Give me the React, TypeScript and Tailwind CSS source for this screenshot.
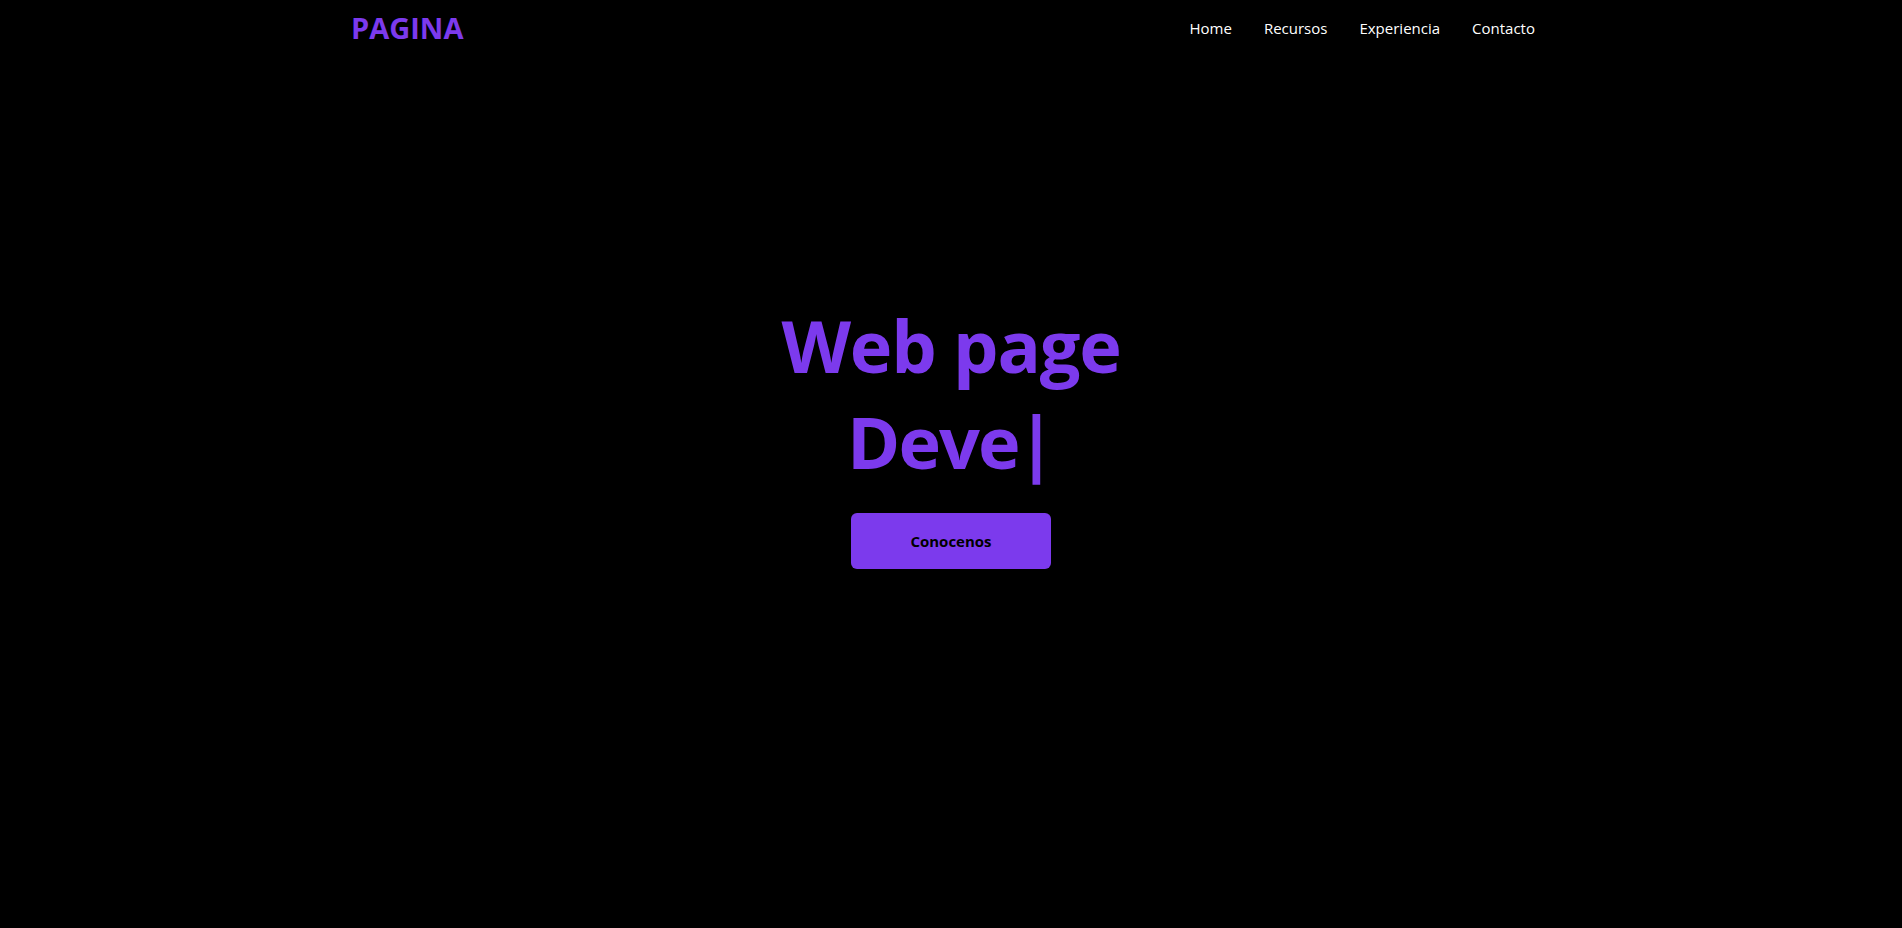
import React from "react";

export default function App() {
  return (
    <div className="min-h-screen w-full bg-black" style={{ fontFamily: '"Open Sans", "Noto Sans", sans-serif' }}>
      <header className="mx-auto flex h-[56px] max-w-[1200px] items-center justify-between">
        <a className="text-[29px] font-bold text-[#7c3aed]">PAGINA</a>
        <nav>
          <ul className="flex">
            <li className="px-4 text-[15px] text-white">Home</li>
            <li className="px-4 text-[15px] text-white">Recursos</li>
            <li className="px-4 text-[15px] text-white">Experiencia</li>
            <li className="px-4 text-[15px] text-white">Contacto</li>
          </ul>
        </nav>
      </header>
      <section className="flex flex-col items-center pt-[241px]">
        <h1 className="text-center text-[72px] font-bold leading-[96px] tracking-[-1.2px] text-[#7c3aed]">
          Web page
          <br />
          <span className="tracking-[-2px]">Deve</span>
          <span className="-ml-[2px]">|</span>
        </h1>
        <button className="mt-[24px] h-[56px] w-[200px] rounded-md bg-[#7c3aed] text-[15px] font-bold text-black">
          Conocenos
        </button>
      </section>
    </div>
  );
}
